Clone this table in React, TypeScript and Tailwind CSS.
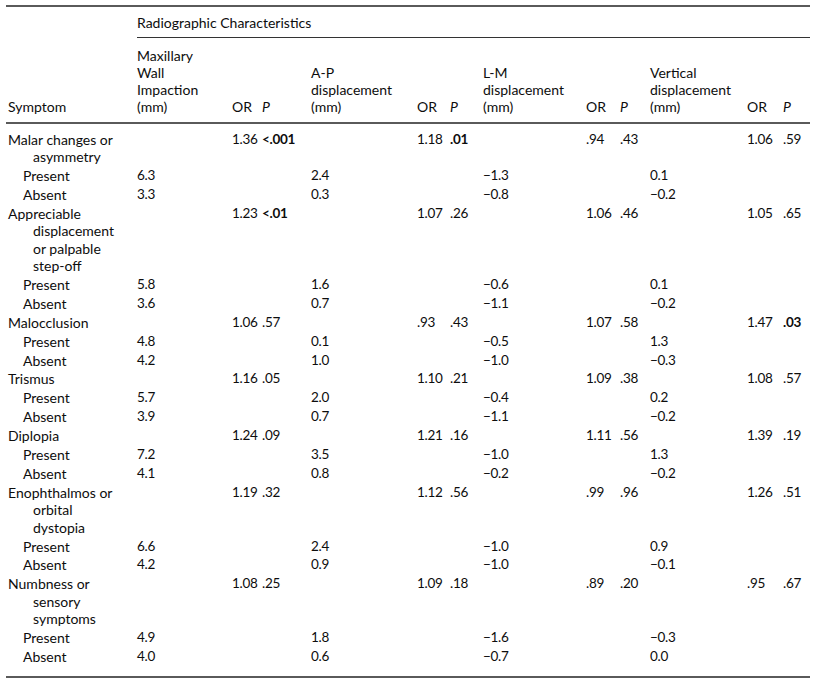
type Group = {
  label: string[];
  stats: [string, string][];
  bold: boolean[];
  present: string[];
  absent: string[];
};

const groups: Group[] = [
  {
    label: ["Malar changes or", "asymmetry"],
    stats: [["1.36", "<.001"], ["1.18", ".01"], [".94", ".43"], ["1.06", ".59"]],
    bold: [true, true, false, false],
    present: ["6.3", "2.4", "−1.3", "0.1"],
    absent: ["3.3", "0.3", "−0.8", "−0.2"],
  },
  {
    label: ["Appreciable", "displacement", "or palpable", "step-off"],
    stats: [["1.23", "<.01"], ["1.07", ".26"], ["1.06", ".46"], ["1.05", ".65"]],
    bold: [true, false, false, false],
    present: ["5.8", "1.6", "−0.6", "0.1"],
    absent: ["3.6", "0.7", "−1.1", "−0.2"],
  },
  {
    label: ["Malocclusion"],
    stats: [["1.06", ".57"], [".93", ".43"], ["1.07", ".58"], ["1.47", ".03"]],
    bold: [false, false, false, true],
    present: ["4.8", "0.1", "−0.5", "1.3"],
    absent: ["4.2", "1.0", "−1.0", "−0.3"],
  },
  {
    label: ["Trismus"],
    stats: [["1.16", ".05"], ["1.10", ".21"], ["1.09", ".38"], ["1.08", ".57"]],
    bold: [false, false, false, false],
    present: ["5.7", "2.0", "−0.4", "0.2"],
    absent: ["3.9", "0.7", "−1.1", "−0.2"],
  },
  {
    label: ["Diplopia"],
    stats: [["1.24", ".09"], ["1.21", ".16"], ["1.11", ".56"], ["1.39", ".19"]],
    bold: [false, false, false, false],
    present: ["7.2", "3.5", "−1.0", "1.3"],
    absent: ["4.1", "0.8", "−0.2", "−0.2"],
  },
  {
    label: ["Enophthalmos or", "orbital", "dystopia"],
    stats: [["1.19", ".32"], ["1.12", ".56"], [".99", ".96"], ["1.26", ".51"]],
    bold: [false, false, false, false],
    present: ["6.6", "2.4", "−1.0", "0.9"],
    absent: ["4.2", "0.9", "−1.0", "−0.1"],
  },
  {
    label: ["Numbness or", "sensory", "symptoms"],
    stats: [["1.08", ".25"], ["1.09", ".18"], [".89", ".20"], [".95", ".67"]],
    bold: [false, false, false, false],
    present: ["4.9", "1.8", "−1.6", "−0.3"],
    absent: ["4.0", "0.6", "−0.7", "0.0"],
  },
];

// column widths, left edge of table at x=6
const widths = [131, 95, 30, 49, 106, 33, 33, 103, 34, 30, 97, 36, 27];

const cell = "align-top py-[0.7px] text-left";
const num = "text-[13.5px] tracking-[-0.3px]";

function SubRow({ name, values, last }: { name: string; values: string[]; last?: boolean }) {
  const pad = last ? "pb-[10px]" : "";
  return (
    <tr>
      <td className={`${cell} pl-[17px] ${pad}`}>{name}</td>
      {values.map((v, i) => [
        <td key={`v${i}`} className={`${cell} ${num} ${pad}`}>{v}</td>,
        <td key={`o${i}`} className={`${cell} ${pad}`}></td>,
        <td key={`p${i}`} className={`${cell} ${pad}`}></td>,
      ])}
    </tr>
  );
}

function GroupRows({ g, first, last }: { g: Group; first: boolean; last: boolean }) {
  const pad = first ? "pt-[7px]" : "";
  return (
    <>
      <tr>
        <td className={`${cell} pl-[2px] ${pad}`}>
          {g.label.map((l, i) => (
            <div key={i} className={i > 0 ? "pl-[25px]" : ""}>
              {l}
            </div>
          ))}
        </td>
        {g.stats.map(([or, p], i) => [
          <td key={`e${i}`} className={`${cell} ${pad}`}></td>,
          <td key={`r${i}`} className={`${cell} ${num} ${pad}`}>{or}</td>,
          <td key={`p${i}`} className={`${cell} ${num} ${pad} ${g.bold[i] ? "font-bold" : ""}`}>
            {p}
          </td>,
        ])}
      </tr>
      <SubRow name="Present" values={g.present} />
      <SubRow name="Absent" values={g.absent} last={last} />
    </>
  );
}

export default function App() {
  const head = "align-bottom pt-[9px] pb-[7px] text-left font-normal border-b-2 border-[#5a5a5a]";
  return (
    <div className="w-[818px] h-[680px] bg-white pt-[5px] font-['Lato',sans-serif] text-[14px] leading-[17.5px] text-[#0d0d0d]">
      <table className="ml-[6px] w-[804px] table-fixed border-collapse border-y-2 border-[#5a5a5a]">
        <colgroup>
          {widths.map((w, i) => (
            <col key={i} style={{ width: w }} />
          ))}
        </colgroup>
        <thead>
          <tr>
            <th></th>
            <th
              colSpan={12}
              className="pt-[7px] pb-[5px] text-left font-normal border-b border-[#333]"
            >
              Radiographic Characteristics
            </th>
          </tr>
          <tr className="leading-[17px]">
            <th className={`${head} pl-[2px]`}>Symptom</th>
            <th className={head}>
              Maxillary
              <br />
              Wall
              <br />
              Impaction
              <br />
              (mm)
            </th>
            <th className={head}>OR</th>
            <th className={`${head} italic`}>P</th>
            <th className={head}>
              A-P
              <br />
              displacement
              <br />
              (mm)
            </th>
            <th className={head}>OR</th>
            <th className={`${head} italic`}>P</th>
            <th className={head}>
              L-M
              <br />
              displacement
              <br />
              (mm)
            </th>
            <th className={head}>OR</th>
            <th className={`${head} italic`}>P</th>
            <th className={head}>
              Vertical
              <br />
              displacement
              <br />
              (mm)
            </th>
            <th className={head}>OR</th>
            <th className={`${head} italic`}>P</th>
          </tr>
        </thead>
        <tbody>
          {groups.map((g, i) => (
            <GroupRows key={i} g={g} first={i === 0} last={i === groups.length - 1} />
          ))}
        </tbody>
      </table>
    </div>
  );
}
